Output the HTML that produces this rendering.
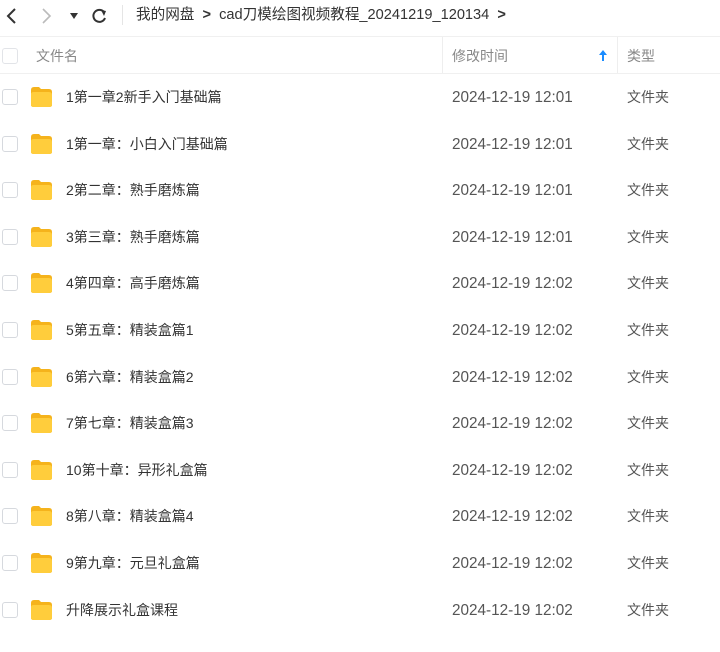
<!DOCTYPE html>
<html><head><meta charset="utf-8"><style>
body{margin:0;width:720px;height:652px;background:#fff;font-family:"Liberation Sans","Noto Sans CJK SC",sans-serif;position:relative;overflow:hidden}
.a{position:absolute;white-space:nowrap;line-height:20px;height:20px}
.cb{position:absolute;left:2px;width:14px;height:14px;border:1px solid #d6d9de;border-radius:3px;background:#fff}
.fd{position:absolute;left:30px;width:23px;height:22px}
.t{position:absolute;white-space:nowrap;font-size:14px;line-height:20px;height:20px;color:#555}
.nm{left:66px;color:#333}
.dt{left:452px;font-size:15.3px}
.tp{left:627px}
</style></head><body>
<svg style="position:absolute;left:0;top:0" width="120" height="34">
<path d="M15 9 L8 16 L15 23" stroke="#333" stroke-width="2" fill="none"/>
<path d="M43 9 L50 16 L43 23" stroke="#bbb" stroke-width="1.6" fill="none"/>
<path d="M70 13 L78 13 L74 19 Z" fill="#333"/>
<path d="M104 12 A6 6 0 1 0 105 18" stroke="#333" stroke-width="2" fill="none"/>
<path d="M101 10 L106 11 L104 16 Z" fill="#333"/>
</svg>
<div class="a" style="left:122px;top:5px;width:1px;height:20px;background:#e5e5e5"></div>
<div class="t" style="left:136px;top:5px;color:#333;font-size:14.6px">我的网盘 &nbsp;<b>&gt;</b>&nbsp; cad刀模绘图视频教程_20241219_120134 &nbsp;<b>&gt;</b></div>
<div class="a" style="left:0;top:36px;width:720px;height:1px;background:#f0f0f0"></div>
<div class="a" style="left:0;top:73px;width:720px;height:1px;background:#f0f0f0"></div>
<div class="a" style="left:442px;top:37px;width:1px;height:36px;background:#eee"></div>
<div class="a" style="left:617px;top:37px;width:1px;height:36px;background:#eee"></div>
<div class="cb" style="top:48px;border-color:#e2e4e8"></div>
<div class="t" style="left:36px;top:46px;color:#888">文件名</div>
<div class="t" style="left:452px;top:46px;color:#888">修改时间</div>
<svg style="position:absolute;left:598px;top:49px" width="10" height="13"><path d="M5 1 L9 6 L6 6 L6 12 L4 12 L4 6 L1 6 Z" fill="#1a8cff"/></svg>
<div class="t" style="left:627px;top:46px;color:#888">类型</div>
<div id="rows"></div>
<script>
var r=[["1第一章2新手入门基础篇","12:01"],["1第一章：小白入门基础篇","12:01"],["2第二章：熟手磨炼篇","12:01"],["3第三章：熟手磨炼篇","12:01"],["4第四章：高手磨炼篇","12:02"],["5第五章：精装盒篇1","12:02"],["6第六章：精装盒篇2","12:02"],["7第七章：精装盒篇3","12:02"],["10第十章：异形礼盒篇","12:02"],["8第八章：精装盒篇4","12:02"],["9第九章：元旦礼盒篇","12:02"],["升降展示礼盒课程","12:02"]];
var h="";r.forEach(function(x,i){var c=Math.round(97+i*46.6);
h+='<div class="cb" style="top:'+(c-8)+'px"></div>';
h+='<svg class="fd" style="top:'+(c-11)+'px" viewBox="0 0 23 22"><path d="M1 4 Q1 1 4 1 L9 1 L11 3 L19 3 Q22 3 22 6 L22 19 Q22 21 19 21 L4 21 Q1 21 1 19 Z" fill="#f5b31c"/><path d="M1 8 Q1 6 4 6 L19 6 Q22 6 22 9 L22 19 Q22 21 19 21 L4 21 Q1 21 1 19 Z" fill="#ffcd3c"/></svg>';
h+='<div class="t nm" style="top:'+(c-10)+'px">'+x[0]+'</div>';
h+='<div class="t dt" style="top:'+(c-10)+'px;line-height:22px">2024-12-19 '+x[1]+'</div>';
h+='<div class="t tp" style="top:'+(c-10)+'px">文件夹</div>';});
document.getElementById("rows").innerHTML=h;
</script>
</body></html>
